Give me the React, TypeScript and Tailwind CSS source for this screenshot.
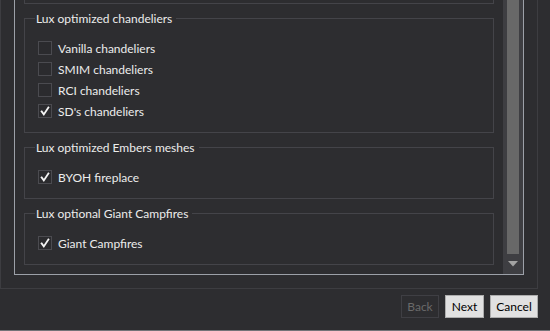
import React from "react";

type Option = { label: string; checked: boolean };

const groups: { title: string; options: Option[] }[] = [
  {
    title: "Lux optimized chandeliers",
    options: [
      { label: "Vanilla chandeliers", checked: false },
      { label: "SMIM chandeliers", checked: false },
      { label: "RCI chandeliers", checked: false },
      { label: "SD's chandeliers", checked: true },
    ],
  },
  {
    title: "Lux optimized Embers meshes",
    options: [{ label: "BYOH fireplace", checked: true }],
  },
  {
    title: "Lux optional Giant Campfires",
    options: [{ label: "Giant Campfires", checked: true }],
  },
];

function CheckBox({ label, checked }: Option) {
  return (
    <label className="flex items-center h-[14px] gap-[6px]">
      <span className="w-[14px] h-[14px] shrink-0 border border-[#4b4b50] bg-[#2b2b2e] flex items-center justify-center">
        {checked && (
          <svg width="12" height="12" viewBox="0 0 12 12">
            <path d="M2.6 6.4 L4.8 9.4 L9.4 2.4" fill="none" stroke="#f4f4f4" strokeWidth="1.8" strokeLinecap="square" />
          </svg>
        )}
      </span>
      <span className="text-[#ececec] leading-[14px] pt-[2px]">{label}</span>
    </label>
  );
}

function GroupBox({ title, options }: { title: string; options: Option[] }) {
  return (
    <div className="relative border border-[#444449] pt-[22px] pb-[14px] pl-[13px] flex flex-col gap-[7px]">
      <span className="absolute -top-[8px] left-[10px] px-[1px] pr-[4px] bg-[#2d2d30] text-[#ececec] leading-[16px]">
        {title}
      </span>
      {options.map((o) => (
        <CheckBox key={o.label} {...o} />
      ))}
    </div>
  );
}

export default function App() {
  return (
    <div className="w-[550px] h-[331px] bg-[#2d2d30] border-b border-[#737378] flex flex-col overflow-hidden font-['Lato','Liberation_Sans',sans-serif] text-[12px]">
      {/* wizard page */}
      <div className="w-[538px] h-[289px] shrink-0 border-x border-b border-[#3d3d41] pl-[13px] pr-[13px] pb-[13px] flex flex-col justify-end overflow-hidden">
        <div className="flex border-x border-b border-[#9ca0a8] min-h-0">
          {/* scrolled content */}
          <div className="flex-1 px-[9px] pb-[9px] flex flex-col justify-end gap-[14px] overflow-hidden">
            <div className="h-[60px] shrink-0 border border-[#444449]" />
            {groups.map((g) => (
              <GroupBox key={g.title} title={g.title} options={g.options} />
            ))}
          </div>
          {/* scrollbar */}
          <div className="w-[20px] shrink-0 bg-[#3e3e42] flex flex-col justify-end">
            <div className="h-[300px] mx-[4px] bg-[#686868]" />
            <div className="h-[24px] flex items-center justify-center">
              <svg width="10" height="6" viewBox="0 0 10 6">
                <path d="M0 0 H10 L5 5.5 Z" fill="#a3a3a3" />
              </svg>
            </div>
          </div>
        </div>
      </div>

      {/* buttons */}
      <div className="flex justify-end gap-[6px] pt-[6px] pr-[12px]">
        <button className="w-[38px] h-[23px] pt-[1px] border border-[#3f3f44] text-[#6a6a6a]">Back</button>
        <button className="w-[39px] h-[23px] pt-[1px] border border-[#adadad] bg-[#e1e1e1] text-black">Next</button>
        <button className="w-[48px] h-[23px] pt-[1px] border border-[#adadad] bg-[#e1e1e1] text-black">Cancel</button>
      </div>
    </div>
  );
}
